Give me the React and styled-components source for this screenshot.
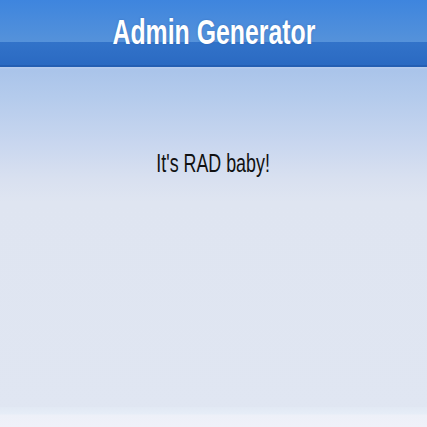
import styled, { createGlobalStyle } from "styled-components";

const GlobalStyle = createGlobalStyle`
  html, body {
    margin: 0;
    padding: 0;
    height: 100%;
  }
  #root {
    height: 100%;
  }
  body {
    font-family: "Liberation Sans", Arial, sans-serif;
    background: #e0e6f2;
  }
`;

export default function App() {
  return (
    <>
      <GlobalStyle />
      <Page>
        <Header>
          <Squeeze $scale={0.72}>
            <Title>Admin Generator</Title>
          </Squeeze>
        </Header>
        <Content>
          <Main>
            <Squeeze $scale={0.7}>
              <Message>It's RAD baby!</Message>
            </Squeeze>
          </Main>
          <Footer />
        </Content>
      </Page>
    </>
  );
}

const Page = styled.div`
  display: flex;
  flex-direction: column;
  height: 100%;
`;

const Header = styled.header`
  height: 67px;
  flex: none;
  display: flex;
  align-items: center;
  justify-content: center;
  padding-bottom: 2px;
  box-sizing: border-box;
  background: linear-gradient(
    #3e85de 0,
    #5592da 42px,
    #3273c9 42px,
    #2b6ac2 65px,
    #255fb3 65px,
    #255fb3 67px
  );
`;

const Content = styled.div`
  flex: 1;
  display: flex;
  flex-direction: column;
  background: linear-gradient(
    #b9cdee 0,
    #aac4ea 3px,
    #b4cbec 30px,
    #c8d6ef 75px,
    #d8e0f0 110px,
    #dfe5f1 135px,
    #e0e6f2 100%
  );
`;

const Squeeze = styled.div`
  display: inline-block;
  transform: scaleX(${(p) => p.$scale});
  white-space: nowrap;
`;

const Title = styled.h1`
  margin: 0;
  font-size: 34.5px;
  font-weight: bold;
  color: #ffffff;
  line-height: 1;
  text-shadow: 0 0 2px rgba(30, 70, 140, 0.5);
`;

const Main = styled.main`
  flex: 1;
  display: flex;
  justify-content: center;
  padding-top: 84px;
`;

const Message = styled.p`
  margin: 0;
  font-size: 25.5px;
  line-height: 1;
  color: #111111;
`;

const Footer = styled.footer`
  height: 20px;
  background: linear-gradient(#e2e9f4 0, #e6edf7 7px, #edf0f8 8px, #eff1f9 100%);
`;
